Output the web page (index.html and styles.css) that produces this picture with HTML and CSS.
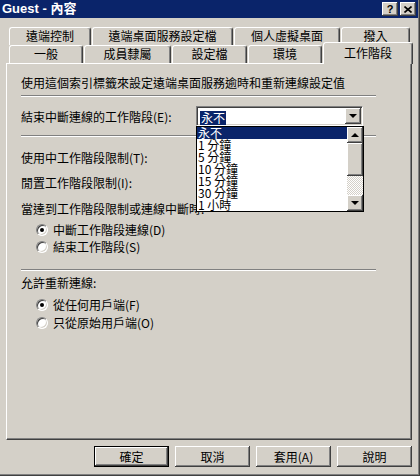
FILE: index.html
```html
<!DOCTYPE html>
<html lang="zh-Hant">
<head>
    <meta charset="UTF-8">
    <title>Guest - 內容</title>
    <link rel="stylesheet" href="styles.css">
</head>
<body>
    <div class="window">
        <div class="titlebar">
            <span class="title">Guest - 內容</span>
            <div class="caption-btns">
                <span class="cap-btn help">?</span>
                <span class="cap-btn">
                    <svg width="8" height="7" viewBox="0 0 8 7"><path d="M0.5 0.5 L7.5 6.5 M7.5 0.5 L0.5 6.5" stroke="#000" stroke-width="1.6" fill="none"/></svg>
                </span>
            </div>
        </div>

        <div class="tabs">
            <div class="tab-row back">
                <div class="tab w82">遠端控制</div>
                <div class="tab w141">遠端桌面服務設定檔</div>
                <div class="tab w106">個人虛擬桌面</div>
                <div class="tab w69">撥入</div>
            </div>
            <div class="tab-row front">
                <div class="tab w74">一般</div>
                <div class="tab w87">成員隸屬</div>
                <div class="tab w75">設定檔</div>
                <div class="tab w74">環境</div>
                <div class="tab active">工作階段</div>
            </div>
        </div>

        <div class="panel">
            <div class="intro">使用這個索引標籤來設定遠端桌面服務逾時和重新連線設定值</div>
            <div class="sep first"></div>

            <div class="field-row top">
                <span class="label">結束中斷連線的工作階段(E):</span>
                <div class="combo-wrap">
                    <div class="combo">
                        <div class="combo-text"><span class="hl">永不</span></div>
                        <span class="combo-btn"><i class="arrow down"></i></span>
                    </div>
                    <div class="droplist">
                        <div class="items">
                            <div class="item sel">永不</div>
                            <div class="item">1 分鐘</div>
                            <div class="item">5 分鐘</div>
                            <div class="item">10 分鐘</div>
                            <div class="item">15 分鐘</div>
                            <div class="item">30 分鐘</div>
                            <div class="item">1 小時</div>
                        </div>
                        <div class="vscroll">
                            <span class="sb-btn"><i class="arrow up"></i></span>
                            <span class="thumb"></span>
                            <span class="track"></span>
                            <span class="sb-btn"><i class="arrow down"></i></span>
                        </div>
                    </div>
                </div>
            </div>
            <div class="sep second"></div>

            <div class="field-row limit">
                <span class="label">使用中工作階段限制(T):</span>
            </div>
            <div class="field-row limit next">
                <span class="label">閒置工作階段限制(I):</span>
            </div>

            <div class="caption">當達到工作階段限制或連線中斷時:</div>
            <div class="radio-row r1"><span class="radio checked"></span>中斷工作階段連線(D)</div>
            <div class="radio-row r2"><span class="radio"></span>結束工作階段(S)</div>

            <div class="sep third"></div>

            <div class="caption reconnect">允許重新連線:</div>
            <div class="radio-row r3"><span class="radio checked"></span>從任何用戶端(F)</div>
            <div class="radio-row r4"><span class="radio"></span>只從原始用戶端(O)</div>
        </div>

        <div class="buttons">
            <span class="btn default">確定</span>
            <span class="btn">取消</span>
            <span class="btn">套用(A)</span>
            <span class="btn">說明</span>
        </div>
    </div>
</body>
</html>
```

FILE: styles.css
```css
* {
    box-sizing: border-box;
}
body {
    margin: 0;
    background: #d4d0c8;
    color: #000;
    font-family: "Noto Sans CJK TC", sans-serif;
    font-size: 12px;
}
.window {
    width: 420px;
    height: 476px;
    padding-right: 2px;
    background: #d4d0c8;
    box-shadow: inset -1px -1px #404040, inset -2px -2px #808080;
}

/* title bar */
.titlebar {
    height: 18px;
    padding: 0 2px;
    display: flex;
    align-items: center;
    justify-content: space-between;
    background: #0a246a;
    color: #fff;
}
.title {
    font-family: "Liberation Sans", "Noto Sans CJK TC", sans-serif;
    font-weight: bold;
    font-size: 13px;
    line-height: 18px;
}
.caption-btns {
    display: flex;
    gap: 2px;
}
.cap-btn {
    width: 16px;
    height: 14px;
    display: flex;
    align-items: center;
    justify-content: center;
    background: #d4d0c8;
    color: #000;
    box-shadow: inset -1px -1px #404040, inset 1px 1px #fff, inset -2px -2px #808080;
}
.cap-btn.help {
    font-family: "Liberation Sans", sans-serif;
    font-weight: bold;
    font-size: 11px;
    line-height: 14px;
}

/* tabs */
.tabs {
    margin-top: 9px;
}
.tab-row {
    display: flex;
    height: 18px;
    padding-left: 9px;
}
.tab-row.front {
    height: 21px;
    margin-top: -3px;
    align-items: flex-end;
}
.tab {
    height: 18px;
    margin-right: 1px;
    background: #d4d0c8;
    border-top: 1px solid #fff;
    border-left: 1px solid #fff;
    border-right: 1px solid #404040;
    border-radius: 3px 3px 0 0;
    box-shadow: inset -1px 0 #808080;
    text-align: center;
    line-height: 16px;
}
.w69 { width: 69px; }
.w74 { width: 74px; }
.w75 { width: 75px; }
.w82 { width: 82px; }
.w87 { width: 87px; }
.w106 { width: 106px; }
.w141 { width: 141px; }
.tab.active {
    position: relative;
    z-index: 1;
    width: 90px;
    height: 22px;
    margin-right: 0;
    margin-bottom: -1px;
    line-height: 19px;
}

/* panel */
.panel {
    width: 406px;
    height: 377px;
    margin-left: 6px;
    padding: 11px 0 0 14px;
    border: 1px solid;
    border-color: #fff #404040 #404040 #fff;
    box-shadow: inset -1px -1px #808080;
}
.intro,
.caption {
    line-height: 16px;
    white-space: nowrap;
}
.sep {
    width: 355px;
    border-top: 1px solid #808080;
    border-bottom: 1px solid #fff;
}
.sep.first { margin-top: 4px; }
.sep.second { margin-top: 9px; }
.sep.third { margin-top: 14px; }

.field-row {
    display: flex;
    align-items: center;
    height: 20px;
}
.field-row.top { margin-top: 9px; }
.field-row.limit { margin-top: 10px; }
.field-row.next { margin-top: 5px; }
.label {
    width: 175px;
    white-space: nowrap;
}

.caption { margin-top: 9px; }
.caption.reconnect { margin-top: 4px; }

/* combo box */
.combo-wrap {
    position: relative;
}
.combo {
    width: 167px;
    height: 20px;
    display: flex;
    border: 1px solid;
    border-color: #808080 #fff #fff #808080;
    box-shadow: inset 1px 1px #404040, inset -1px -1px #d4d0c8;
    padding: 1px;
    background: #fff;
}
.combo-text {
    flex: 1;
    padding: 1px 0 0 2px;
}
.hl {
    display: inline-block;
    padding: 0 1px;
    line-height: 14px;
    background: #0a246a;
    color: #fff;
}
.combo-btn,
.sb-btn,
.thumb {
    display: flex;
    align-items: center;
    justify-content: center;
    background: #d4d0c8;
    box-shadow: inset -1px -1px #404040, inset 1px 1px #fff, inset -2px -2px #808080;
}
.combo-btn {
    width: 16px;
    height: 16px;
}
.arrow {
    width: 0;
    height: 0;
    border-left: 4px solid transparent;
    border-right: 4px solid transparent;
}
.arrow.down {
    border-top: 4px solid #000;
}
.arrow.up {
    border-bottom: 4px solid #000;
}

/* open drop-down list */
.droplist {
    position: absolute;
    top: 100%;
    left: 0;
    z-index: 2;
    width: 168px;
    height: 86px;
    display: flex;
    border: 1px solid #000;
    background: #fff;
}
.items {
    flex: 1;
}
.item {
    height: 12px;
    padding-left: 1px;
    line-height: 12px;
    white-space: nowrap;
}
.item.sel {
    background: #0a246a;
    color: #fff;
}
.vscroll {
    width: 16px;
    display: flex;
    flex-direction: column;
}
.sb-btn {
    height: 16px;
}
.thumb {
    height: 33px;
}
.track {
    flex: 1;
    background: repeating-conic-gradient(#d4d0c8 0 25%, #fff 0 50%) 0 0 / 2px 2px;
}

/* radio buttons */
.radio-row {
    display: flex;
    align-items: center;
    gap: 5px;
    height: 16px;
    padding-left: 15px;
    line-height: 16px;
    white-space: nowrap;
}
.radio-row.r1 { margin-top: 5px; }
.radio-row.r2 { margin-top: 1px; }
.radio-row.r3 { margin-top: 6px; }
.radio-row.r4 { margin-top: 2px; }
.radio {
    position: relative;
    width: 12px;
    height: 12px;
    border-radius: 50%;
    border: 1px solid;
    border-color: #808080 #fff #fff #808080;
    background: #fff;
    box-shadow: inset 1px 1px #404040, inset -1px -1px #d4d0c8;
}
.radio.checked::after {
    content: '';
    position: absolute;
    top: 3px;
    left: 3px;
    width: 4px;
    height: 4px;
    border-radius: 50%;
    background: #000;
}

/* dialog buttons */
.buttons {
    display: flex;
    justify-content: flex-end;
    gap: 6px;
    margin-top: 6px;
    padding-right: 6px;
}
.btn {
    width: 75px;
    height: 21px;
    background: #d4d0c8;
    box-shadow: inset -1px -1px #404040, inset 1px 1px #fff, inset -2px -2px #808080;
    text-align: center;
    line-height: 21px;
}
.btn.default {
    border: 1px solid #000;
    line-height: 19px;
}
```
